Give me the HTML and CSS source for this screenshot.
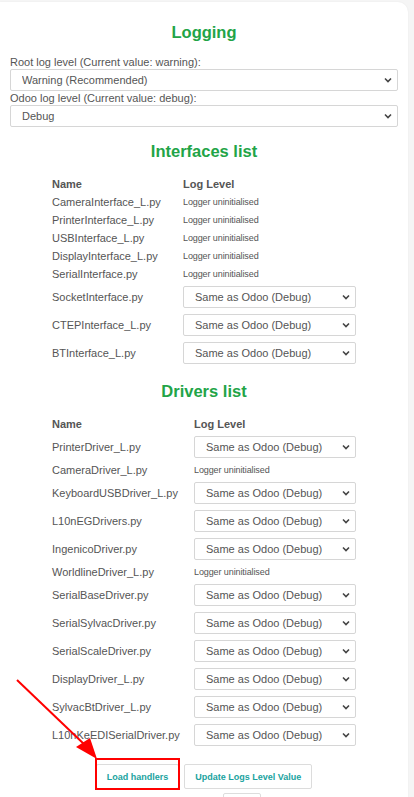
FILE: index.html
```html
<!DOCTYPE html>
<html>
<head>
<meta charset="utf-8">
<link rel="stylesheet" href="styles.css">
</head>
<body>
<div class="card">
  <h2 class="title first">Logging</h2>
  <label class="field-label">Root log level (Current value: warning):</label>
  <select class="sel wide"><option>Warning (Recommended)</option></select>
  <label class="field-label">Odoo log level (Current value: debug):</label>
  <select class="sel wide"><option>Debug</option></select>

  <h2 class="title">Interfaces list</h2>
  <table class="loglist">
    <colgroup><col class="c-name-if"><col></colgroup>
    <tr class="txt"><th>Name</th><th>Log Level</th></tr>
    <tr class="txt"><td>CameraInterface_L.py</td><td class="un">Logger uninitialised</td></tr>
    <tr class="txt"><td>PrinterInterface_L.py</td><td class="un">Logger uninitialised</td></tr>
    <tr class="txt"><td>USBInterface_L.py</td><td class="un">Logger uninitialised</td></tr>
    <tr class="txt"><td>DisplayInterface_L.py</td><td class="un">Logger uninitialised</td></tr>
    <tr class="txt"><td>SerialInterface.py</td><td class="un">Logger uninitialised</td></tr>
    <tr class="sr"><td>SocketInterface.py</td><td><select class="sel"><option>Same as Odoo (Debug)</option></select></td></tr>
    <tr class="sr"><td>CTEPInterface_L.py</td><td><select class="sel"><option>Same as Odoo (Debug)</option></select></td></tr>
    <tr class="sr"><td>BTInterface_L.py</td><td><select class="sel"><option>Same as Odoo (Debug)</option></select></td></tr>
  </table>

  <h2 class="title">Drivers list</h2>
  <table class="loglist">
    <colgroup><col class="c-name-dr"><col></colgroup>
    <tr class="txt"><th>Name</th><th>Log Level</th></tr>
    <tr class="sr"><td>PrinterDriver_L.py</td><td><select class="sel"><option>Same as Odoo (Debug)</option></select></td></tr>
    <tr class="txt"><td>CameraDriver_L.py</td><td class="un">Logger uninitialised</td></tr>
    <tr class="sr"><td>KeyboardUSBDriver_L.py</td><td><select class="sel"><option>Same as Odoo (Debug)</option></select></td></tr>
    <tr class="sr"><td>L10nEGDrivers.py</td><td><select class="sel"><option>Same as Odoo (Debug)</option></select></td></tr>
    <tr class="sr"><td>IngenicoDriver.py</td><td><select class="sel"><option>Same as Odoo (Debug)</option></select></td></tr>
    <tr class="txt"><td>WorldlineDriver_L.py</td><td class="un">Logger uninitialised</td></tr>
    <tr class="sr"><td>SerialBaseDriver.py</td><td><select class="sel"><option>Same as Odoo (Debug)</option></select></td></tr>
    <tr class="sr"><td>SerialSylvacDriver.py</td><td><select class="sel"><option>Same as Odoo (Debug)</option></select></td></tr>
    <tr class="sr"><td>SerialScaleDriver.py</td><td><select class="sel"><option>Same as Odoo (Debug)</option></select></td></tr>
    <tr class="sr"><td>DisplayDriver_L.py</td><td><select class="sel"><option>Same as Odoo (Debug)</option></select></td></tr>
    <tr class="sr"><td>SylvacBtDriver_L.py</td><td><select class="sel"><option>Same as Odoo (Debug)</option></select></td></tr>
    <tr class="sr"><td>L10nKeEDISerialDriver.py</td><td><select class="sel"><option>Same as Odoo (Debug)</option></select></td></tr>
  </table>

  <div class="actions">
    <button class="btn">Load handlers</button>
    <button class="btn">Update Logs Level Value</button>
  </div>
  <div class="more"><span class="more-box"></span></div>
</div>

<svg class="annot" width="414" height="797" viewBox="0 0 414 797">
  <line x1="17" y1="680" x2="86" y2="746" stroke="#f00" stroke-width="2"/>
  <polygon points="76,747 90,738 97,759" fill="#f00"/>
  <rect x="96" y="759" width="83" height="30" fill="none" stroke="#f00" stroke-width="2"/>
</svg>
</body>
</html>
```

FILE: styles.css
```css
html, body {
  margin: 0;
  padding: 0;
}
body {
  background: #f5f5f5;
  padding-top: 2px;
  font-family: "Liberation Sans", Arial, sans-serif;
  color: #555;
  font-size: 11px;
  position: relative;
  height: 795px;
  overflow: hidden;
}
.card {
  width: 408px;
  box-sizing: border-box;
  background: #fff;
  border-top-right-radius: 10px;
  padding: 0 10px 40px;
  box-shadow: 0 0 2px rgba(0,0,0,0.06);
  min-height: 900px;
}
.title {
  margin: 14px 0;
  font-size: 16.5px;
  line-height: 20px;
  font-weight: bold;
  color: #22a447;
  text-align: center;
}
.card > .title:first-child { margin-top: 0; margin-bottom: 13px; padding-top: 20px; }
.field-label {
  display: block;
  font-size: 11px;
  line-height: 14px;
  color: #555;
}
.sel {
  appearance: none;
  -webkit-appearance: none;
  display: block;
  width: 100%;
  height: 22px;
  box-sizing: border-box;
  border: 1px solid #d6d6d6;
  border-radius: 2px;
  background: #fff url("data:image/svg+xml,%3Csvg xmlns='http://www.w3.org/2000/svg' width='8' height='6' viewBox='0 0 8 6'%3E%3Cpath d='M1 1.5l3 3 3-3' fill='none' stroke='%23444' stroke-width='1.6'/%3E%3C/svg%3E") no-repeat right 5px center;
  font-family: "Liberation Sans", Arial, sans-serif;
  font-size: 11px;
  color: #555;
  padding: 0 16px 0 11px;
  margin: 0;
  outline: none;
}
.loglist {
  width: 304px;
  margin: 0 auto;
  border-collapse: collapse;
  table-layout: fixed;
}
.c-name-if { width: 131px; }
.c-name-dr { width: 142px; }
.loglist th, .loglist td {
  padding: 0;
  text-align: left;
  vertical-align: middle;
  white-space: nowrap;
  font-size: 11px;
  color: #555;
}
.loglist th { font-weight: bold; }
.loglist tr.txt th, .loglist tr.txt td { height: 18px; line-height: 18px; }
.loglist tr.sr td { height: 28px; }
.loglist td.un {
  font-size: 9px;
  letter-spacing: -0.1px;
}
.actions {
  display: flex;
  justify-content: center;
  gap: 5px;
  margin-top: 15px;
}
.btn {
  height: 25px;
  box-sizing: border-box;
  background: #fff;
  border: 1px solid #dcdcdc;
  border-radius: 2px;
  padding: 0 10px;
  font-family: "Liberation Sans", Arial, sans-serif;
  font-size: 9px;
  font-weight: bold;
  color: #1aa3a0;
}
.more {
  display: flex;
  justify-content: center;
  padding-left: 76px;
  margin-top: 4px;
}
.more-box {
  width: 38px;
  height: 20px;
  border: 1px solid #ddd;
  border-radius: 2px;
  box-sizing: border-box;
}
.annot {
  position: absolute;
  top: 0;
  left: 0;
  pointer-events: none;
}
```
